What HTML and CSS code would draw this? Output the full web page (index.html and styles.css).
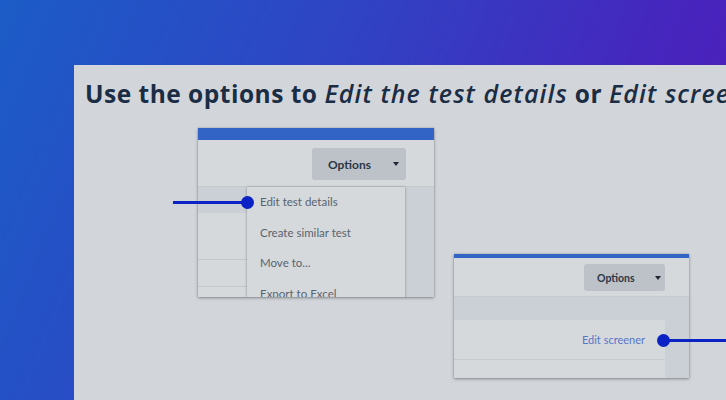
FILE: index.html
```html
<!DOCTYPE html>
<html>
<head>
<meta charset="utf-8">
<link rel="stylesheet" href="styles.css">
</head>
<body>
<div class="stage">
  <div class="panel">
    <h1 class="title">Use the options to <em>Edit the test details</em> or <em>Edit screener</em></h1>
    <div class="scene">
      <div class="card card-a">
        <div class="bar"></div>
        <div class="head">
          <div class="btn">Options<span class="caret"></span></div>
        </div>
        <div class="body">
          <div class="main">
            <div class="row row-dark"></div>
            <div class="row row-mid"></div>
            <div class="row row-low"></div>
            <div class="row row-end"></div>
          </div>
          <div class="gutter"></div>
        </div>
        <div class="menu">
          <div class="item">Edit test details</div>
          <div class="item">Create similar test</div>
          <div class="item">Move to...</div>
          <div class="item">Export to Excel</div>
        </div>
      </div>
      <div class="card card-b">
        <div class="bar"></div>
        <div class="head">
          <div class="btn">Options<span class="caret"></span></div>
        </div>
        <div class="body">
          <div class="main">
            <div class="band"></div>
            <div class="row link-row"><span class="link">Edit screener</span></div>
            <div class="row last-row"></div>
          </div>
          <div class="gutter"></div>
        </div>
      </div>
      <div class="connector conn-a"><span class="dot"></span></div>
      <div class="connector conn-b"><span class="dot"></span></div>
    </div>
  </div>
</div>
</body>
</html>
```
FILE: styles.css
```css
* { box-sizing: border-box; }
html, body { margin: 0; padding: 0; }
body {
  width: 726px;
  height: 400px;
  overflow: hidden;
  font-family: "Lato", "Open Sans", sans-serif;
}
.stage {
  width: 726px;
  height: 400px;
  overflow: hidden;
  padding: 65px 0 0 74px;
  background: linear-gradient(112deg, #1c5cc7 0%, #2f44c4 40%, #4527be 75%, #5317b8 100%);
}
.panel {
  width: 700px;
  height: 335px;
  background: #d2d6da;
  padding: 13px 0 0 11px;
  overflow: hidden;
  white-space: nowrap;
}
.title {
  margin: 0;
  height: 30px;
  overflow: visible;
  font-family: "Open Sans", "Lato", sans-serif;
  font-size: 24.5px;
  line-height: 30px;
  font-weight: 700;
  color: #1b2d44;
  letter-spacing: 0.5px;
}
.title em { font-weight: 600; font-style: italic; font-size: 25px; letter-spacing: 1.1px; }
.scene {
  position: relative;
  display: flex;
  align-items: flex-start;
  padding: 20px 0 0 113px;
}
.card {
  background: #d5d9dc;
  box-shadow: 0 1px 3px rgba(0,0,0,0.35), 0 0 1px rgba(0,0,0,0.25);
  display: flex;
  flex-direction: column;
  overflow: hidden;
  position: relative;
}
.bar { background: #3164c5; }
.head {
  display: flex;
  justify-content: flex-end;
  align-items: flex-start;
  border-bottom: 1px solid #c5cacf;
}
.btn {
  background: #bdc2c8;
  border-radius: 3px;
  color: #2a3646;
  font-weight: 700;
  display: flex;
  align-items: center;
}
.caret {
  width: 0; height: 0;
  border-left: 3.5px solid transparent;
  border-right: 3.5px solid transparent;
  border-top: 4px solid #1e2733;
}
.body { display: flex; flex: 1; }
.main { flex: 1; display: flex; flex-direction: column; }
.gutter { background: #cbd0d6; }

/* card A */
.card-a { width: 236px; height: 169px; }
.card-a .bar { height: 12px; }
.card-a .head { height: 47px; padding: 8px 28px 0 0; }
.card-a .btn { width: 94px; height: 32px; padding-left: 16px; font-size: 12px; }
.card-a .btn .caret { margin-left: 22px; }
.card-a .gutter { width: 29px; }
.card-a .row { border-bottom: 1px solid #c3c8cd; }
.card-a .row-dark { height: 26px; background: #cbd0d6; border-bottom: none; }
.card-a .row-mid { height: 47px; }
.card-a .row-low { height: 27px; }
.card-a .row-end { flex: 1; border-bottom: none; }
.menu {
  position: absolute;
  left: 49px;
  top: 59px;
  width: 158px;
  height: 130px;
  background: #d5d9dc;
  box-shadow: 0 0 2px rgba(0,0,0,0.25), 0 1px 3px rgba(0,0,0,0.15);
  padding-top: 6px;
}
.item {
  height: 30.5px;
  line-height: 17px;
  padding-left: 13px;
  font-size: 11.5px;
  color: #59636f;
}

/* card B */
.card-b { width: 235px; height: 124px; margin: 126px 0 0 20px; }
.card-b .bar { height: 4px; }
.card-b .head { height: 39px; padding: 6px 24px 0 0; }
.card-b .btn { width: 81px; height: 27px; padding-left: 13px; font-size: 10.5px; }
.card-b .btn .caret { margin-left: 20px; }
.card-b .gutter { width: 24px; }
.card-b .band { height: 23px; background: #cbd0d6; }
.card-b .link-row {
  height: 40px;
  border-bottom: 1px solid #c6cbd0;
  display: flex;
  align-items: center;
  justify-content: flex-end;
  padding-right: 20px;
}
.card-b .last-row { flex: 1; }
.link { font-size: 11px; color: #5877c8; }

/* connectors */
.connector {
  position: absolute;
  height: 2.5px;
  background: #0b22c4;
}
.dot {
  position: absolute;
  top: 50%;
  width: 13px;
  height: 13px;
  margin-top: -6.5px;
  border-radius: 50%;
  background: #0b22c4;
}
.conn-a { left: 88px; top: 93px; width: 74px; }
.conn-a .dot { right: -6.5px; }
.conn-b { left: 578px; top: 231px; width: 80px; }
.conn-b .dot { left: -6.5px; }
```
